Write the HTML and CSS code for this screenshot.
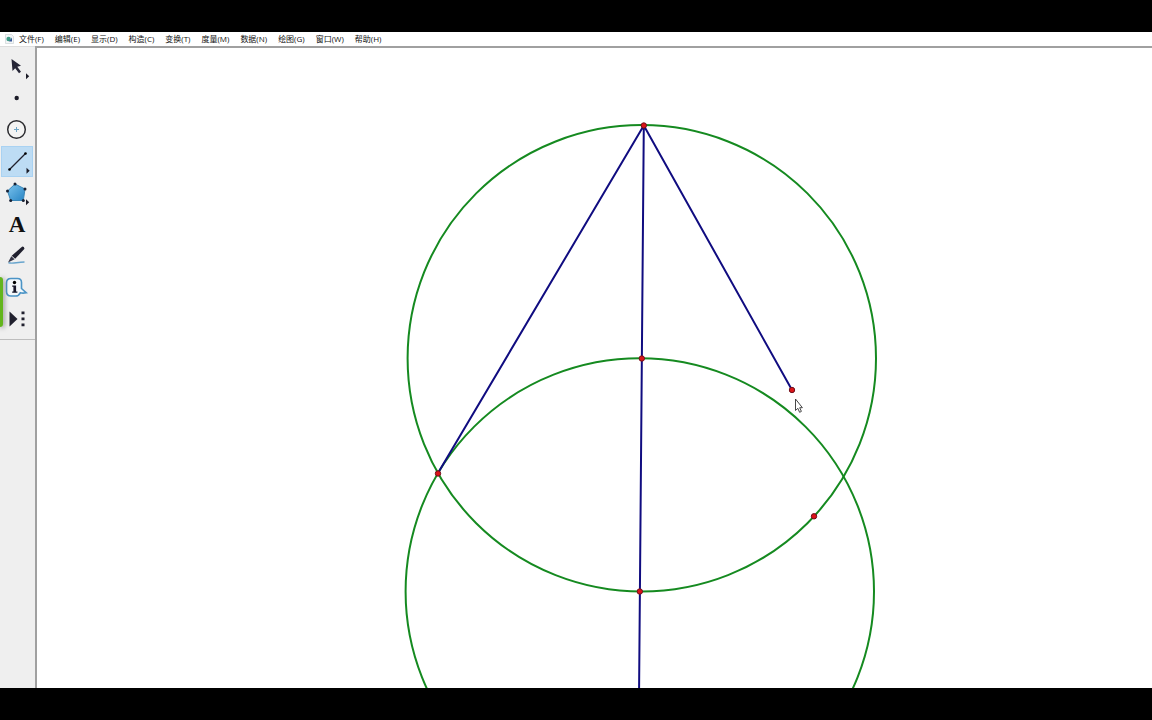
FILE: index.html
```
<!DOCTYPE html>
<html lang="zh-CN">
<head>
<meta charset="utf-8">
<title>几何画板</title>
<link rel="stylesheet" href="styles.css">
</head>
<body>
<div class="app">
  <nav class="menubar">
    <svg class="logo" width="9" height="10" viewBox="0 0 9 10" aria-hidden="true">
      <path d="M.5.5h6l2 2v7h-8z" fill="#f3f6f7" stroke="#cdd3d6" stroke-width=".7"/>
      <circle cx="3.600" cy="5" r="2.200" fill="#3f9c88"/>
      <path d="M4 7.500L7 3.600V7.500z" fill="#39589a"/>
    </svg>
    <button class="menu">文件(F)</button>
    <button class="menu">编辑(E)</button>
    <button class="menu">显示(D)</button>
    <button class="menu">构造(C)</button>
    <button class="menu">变换(T)</button>
    <button class="menu">度量(M)</button>
    <button class="menu">数据(N)</button>
    <button class="menu">绘图(G)</button>
    <button class="menu">窗口(W)</button>
    <button class="menu">帮助(H)</button>
  </nav>
  <div class="workspace">
    <aside class="sidebar">
      <div class="tools">
        <button class="tool" aria-label="箭头">
          <svg width="32" height="31" viewBox="0 0 32 31"><path d="M10.500 8l1 12 2.700-2.700 3.800 5 2-1.500-3.700-5 3.700-1z" fill="#252536"/><path class="more" d="M25 22.200l3.200 3-3.200 3z"/></svg>
        </button>
        <button class="tool" aria-label="点">
          <svg width="32" height="31" viewBox="0 0 32 31"><circle cx="15.700" cy="15" r="2.200" fill="#1c1c28"/></svg>
        </button>
        <button class="tool" aria-label="圆">
          <svg width="32" height="31" viewBox="0 0 32 31"><circle cx="15.500" cy="15.500" r="8.800" fill="#f4f4f3" stroke="#2c2c30" stroke-width="1.500"/><path d="M13 15.500h5M15.500 13v5" stroke="#6fa6c6" stroke-width="1"/></svg>
        </button>
        <button class="tool selected" aria-label="线段" aria-pressed="true">
          <svg width="32" height="31" viewBox="0 0 32 31"><path d="M8.500 23.500L24.500 7.500" stroke="#20202c" stroke-width="1.300"/><circle cx="8.500" cy="23.500" r="1.300"/><circle cx="24.500" cy="7.500" r="1.300"/><path class="more" d="M25.500 21.700l3.200 3-3.200 3z"/></svg>
        </button>
        <button class="tool" aria-label="多边形">
          <svg width="32" height="31" viewBox="0 0 32 31">
            <defs><linearGradient id="blue" x1="0" y1="0" x2="1" y2="1"><stop offset="0" stop-color="#7cc4ee"/><stop offset="1" stop-color="#2784c4"/></linearGradient></defs>
            <path d="M14 7L24 12 22.300 23.500 9.700 23.500 6.500 14z" fill="url(#blue)" stroke="#3b87b8"/>
            <g fill="#182033"><circle cx="14" cy="7" r="1.500"/><circle cx="24" cy="12" r="1.500"/><circle cx="22.300" cy="23.500" r="1.500"/><circle cx="9.700" cy="23.500" r="1.500"/><circle cx="6.500" cy="14" r="1.500"/></g>
            <path class="more" d="M25 22.200l3.200 3-3.200 3z"/>
          </svg>
        </button>
        <button class="tool letter" aria-label="文本">A</button>
        <button class="tool" aria-label="标记">
          <svg width="32" height="31" viewBox="0 0 32 31"><path d="M7.500 22.800c5 1.300 8-.8 16-.8" fill="none" stroke="#68a5cd" stroke-width="1.400"/><path d="M21.300 6.500q2 0 2.200 2.300l-9.300 10-3.500-3z" fill="#20202e"/><path d="M10.300 16.300l3.300 2.900-6.600 3.300z" fill="#343445"/></svg>
        </button>
        <button class="tool" aria-label="信息">
          <svg width="32" height="31" viewBox="0 0 32 31"><path d="M10 6.500h6.500q4 0 4 4V16.500l4.800 4.300q-3.500.7-6 0-1.500 3.200-4.800 3.200h-4.500q-4.500 0-4.500-4.500v-8.500q0-4.500 4.500-4.500z" fill="#f3f8fb" stroke="#4b94c6" stroke-width="1.600"/><circle cx="13.500" cy="10.500" r="1.700"/><path d="M11.200 13.500h3.900v6h1.300v1.200h-5.200v-1.200h1.200v-4.800h-1.200z" fill="#17172a"/></svg>
        </button>
        <button class="tool" aria-label="自定义工具">
          <svg width="32" height="31" viewBox="0 0 32 31"><path d="M8.500 8.500v15l8-7.500z" fill="#20202e"/><path d="M20.500 8.500h3v2.700h-3zM20.500 14.500h3v2.700h-3zM20.500 20.500h3v2.700h-3z" fill="#20202e"/></svg>
        </button>
      </div>
      <div class="tab"></div>
    </aside>
    <main class="sketch">
      <svg class="drawing" role="img" aria-label="两个相交的圆与线段">
        <g transform="translate(-37 -48)">
          <g fill="none" stroke="#158a20" stroke-width="2">
            <ellipse cx="641.800" cy="358.300" rx="234.200" ry="233.200"/>
            <ellipse cx="639.800" cy="591.500" rx="234.200" ry="233.200"/>
          </g>
          <g fill="none" stroke="#100c80" stroke-width="2">
            <path d="M438 473L643.800 125.500 792 390M643.800 125.500L639 700"/>
          </g>
          <g fill="#dc1418" stroke="#70101c" stroke-width="1">
            <circle cx="643.800" cy="125.500" r="2.700"/>
            <circle cx="641.800" cy="358.500" r="2.700"/>
            <circle cx="639.800" cy="591.500" r="2.700"/>
            <circle cx="438" cy="473.500" r="2.700"/>
            <circle cx="792" cy="390" r="2.700"/>
            <circle cx="814" cy="516.300" r="2.700"/>
          </g>
          <path d="M795.500 399v11.500l2.300-2.200 1.800 4 1.800-.9-1.700-3.700h2.700z" fill="#fff" stroke="#333" stroke-width=".9"/>
        </g>
      </svg>
    </main>
  </div>
</div>
</body>
</html>
```
FILE: styles.css
```
* {
  box-sizing: border-box;
}

body {
  margin: 0;
  background: #000;
}

.app {
  display: flex;
  flex-direction: column;
  height: 100vh;
  padding: 32px 0;
}

.menubar {
  display: flex;
  align-items: center;
  gap: 11px;
  height: 14px;
  padding-left: 5px;
  background: #fff;
}

.logo {
  margin-right: -6px;
}

.menu {
  padding: 0;
  border: 0;
  background: none;
  color: #111;
  font: 8px/14px "Open Sans", "Noto Sans CJK SC", sans-serif;
  white-space: nowrap;
}

.workspace {
  display: flex;
  flex: 1;
  min-height: 0;
}

.sidebar {
  position: relative;
  flex: none;
  width: 35px;
  border-top: 1px solid #ddd;
  background: #efefef;
}

.tools {
  display: flex;
  flex-direction: column;
  justify-content: space-between;
  height: 293px;
  padding: 4px 0 5px 1px;
  border-bottom: 1px solid #bdbdbd;
}

.tool {
  display: block;
  width: 32px;
  height: 31px;
  padding: 0;
  border: 0;
  background: none;
}

.tool svg {
  display: block;
}

.selected {
  background: #bddcf4;
  outline: 1px solid #a9d2f2;
  outline-offset: -1px;
}

.more {
  fill: #1c1c28;
}

.letter {
  color: #111;
  font: bold 23px/31px "Liberation Serif", serif;
}

.tab {
  position: absolute;
  top: 230px;
  left: 0;
  width: 3px;
  height: 50px;
  border-radius: 0 3px 3px 0;
  background: #63b51c;
  box-shadow: 1px 1px 5px #777;
}

.sketch {
  flex: 1;
  min-width: 0;
  border-top: 2px solid #a0a0a0;
  border-left: 2px solid #a0a0a0;
  background: #fff;
}

.drawing {
  display: block;
  width: 100%;
  height: 100%;
}
```
